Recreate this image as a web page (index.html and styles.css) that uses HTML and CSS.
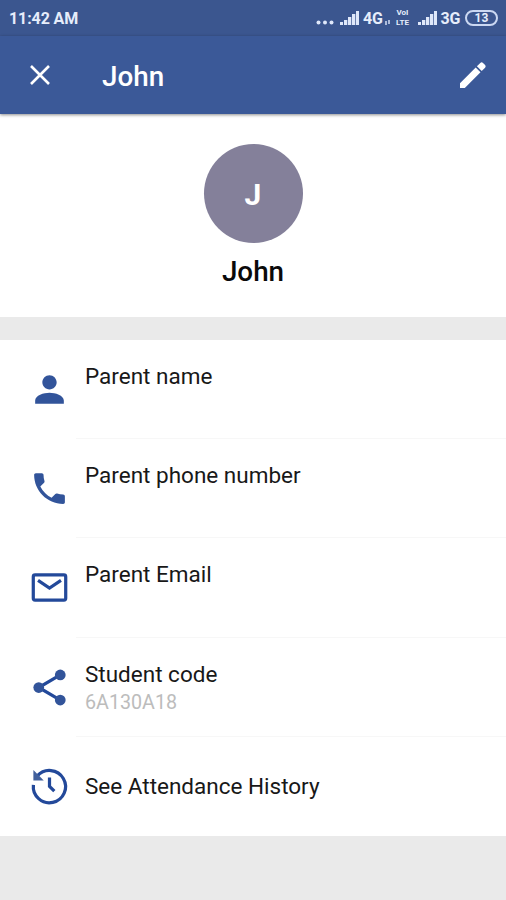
FILE: index.html
```html
<!DOCTYPE html>
<html lang="en">
<head>
<meta charset="utf-8">
<title>John</title>
<link rel="stylesheet" href="styles.css">
</head>
<body>
<div class="status">
  <span class="time">11:42 AM</span>
  <div class="indicators">
    <svg class="dots" width="18" height="16" viewBox="0 0 18 16"><circle cx="2.5" cy="12.5" r="2"/><circle cx="9" cy="12.5" r="2"/><circle cx="15.5" cy="12.5" r="2"/></svg>
    <svg class="signal" width="20" height="16" viewBox="0 0 20 16"><path d="M0 12h3v3H0zM4 10h3.300v5H4zM8 7h3.300v8H8zM12 4h3.300v11H12zM16 1h3v14h-3z"/></svg>
    <span class="net">4G</span>
    <svg class="data" width="6" height="16" viewBox="0 0 6 16"><path d="M0 15v-4h2v4zM3 14v-4h2v4z"/></svg>
    <span class="volte"><span>VoI</span><span>LTE</span></span>
    <svg class="signal second" width="20" height="16" viewBox="0 0 20 16"><path d="M0 12h3v3H0zM4 10h3.300v5H4zM8 7h3.300v8H8zM12 4h3.300v11H12zM16 1h3v14h-3z"/></svg>
    <span class="net">3G</span>
    <span class="battery">13</span>
  </div>
</div>
<header class="appbar">
  <svg class="close" width="20" height="20" viewBox="0 0 20 20"><path d="M1 1l18 18M19 1L1 19"/></svg>
  <h1>John</h1>
  <svg class="edit" width="28" height="28" viewBox="0 0 28 28"><path d="M1 22.200V27h4.800L21.500 11.300l-4.800-4.800zM22.700 10.100l3.400-3.400a2 2 0 0 0 0-2.700l-2.100-2.100a2 2 0 0 0-2.700 0l-3.400 3.400z"/></svg>
</header>
<section class="profile">
  <div class="avatar">J</div>
  <h2>John</h2>
</section>
<main class="list">
  <div class="row">
    <svg class="icon" viewBox="0 0 24 24"><path d="M12 12c2.210 0 4-1.790 4-4s-1.790-4-4-4-4 1.790-4 4 1.790 4 4 4zm0 1.800c-3.200 0-8 1.500-8 4.400V20h16v-1.800c0-2.900-4.800-4.400-8-4.400z"/></svg>
    <div class="text"><div class="label">Parent name</div></div>
  </div>
  <div class="row">
    <svg class="icon phone" viewBox="0 0 24 24"><path d="M6.620 10.790c1.440 2.830 3.760 5.140 6.590 6.590l2.200-2.200c.27-.27.67-.36 1.020-.24 1.120.37 2.330.57 3.570.57.55 0 1 .45 1 1V20c0 .55-.45 1-1 1-9.390 0-17-7.610-17-17 0-.55.45-1 1-1h3.500c.55 0 1 .45 1 1 0 1.250.2 2.450.57 3.570.11.35.030.740-.250 1.020l-2.200 2.200z"/></svg>
    <div class="text"><div class="label">Parent phone number</div></div>
  </div>
  <div class="row">
    <svg class="icon line" viewBox="0 0 24 24"><rect x="2.950" y="4.950" width="18.100" height="14.100" rx="1"/><path d="M5.600 8l6.400 4.300L18.400 8"/></svg>
    <div class="text"><div class="label">Parent Email</div></div>
  </div>
  <div class="row">
    <svg class="icon share" viewBox="0 0 24 24"><path class="links" d="M18 5L6 12l12 7"/><circle cx="18" cy="5" r="3"/><circle cx="6" cy="12" r="3"/><circle cx="18" cy="19" r="3"/></svg>
    <div class="text"><div class="label">Student code</div><div class="value">6A130A18</div></div>
  </div>
  <div class="row last">
    <svg class="icon line" viewBox="0 0 24 24"><path d="M3 11.100a9 9 0 1 0 2.200-5M12 7v4.900l2.700 2.700"/><path class="solid" d="M3 2.800v5.800h5.800z"/></svg>
    <div class="text"><div class="label">See Attendance History</div></div>
  </div>
</main>
</body>
</html>
```
FILE: styles.css
```css
* { box-sizing: border-box; }
body {
  margin: 0;
  min-height: 900px;
  background: #eaeaea;
  font-family: Roboto, "Liberation Sans", sans-serif;
}
svg { display: block; flex: none; }
.status {
  height: 36px;
  padding: 0 8px 0 9px;
  display: flex;
  align-items: center;
  justify-content: space-between;
  background: #3b568f;
  color: #e6edfb;
  fill: #dfe8fa;
}
.time { font-size: 16px; font-weight: 700; line-height: 20px; padding-top: 2px; letter-spacing: -.1px; }
.indicators { display: flex; align-items: center; height: 20px; }
.dots { margin-right: 1px; }
.signal { margin-left: 5px; }
.signal.second { margin-left: 6px; }
.net { font-size: 16px; font-weight: 700; line-height: 20px; padding-top: 2px; margin-left: 3px; letter-spacing: -.3px; }
.data { margin-left: 2px; opacity: .7; }
.volte {
  width: 18px;
  margin-left: 3px;
  font-size: 8px;
  font-weight: 700;
  line-height: 10px;
  text-align: center;
}
.volte span { display: block; }
.battery {
  width: 33px;
  height: 16px;
  margin-left: 5px;
  border: 2px solid #cbd8f2;
  border-radius: 8px;
  font-size: 12px;
  font-weight: 700;
  line-height: 13px;
  text-align: center;
}
.appbar {
  position: relative;
  height: 78px;
  padding: 0 19px 0 30px;
  display: flex;
  align-items: center;
  background: #3b5998;
  color: #fff;
  box-shadow: 0 1px 3px rgba(0, 0, 0, .45);
}
.close { fill: none; stroke: #fff; stroke-width: 2.6; }
h1 { flex: 1; margin: 3px 0 0 52px; font-size: 27.8px; font-weight: 500; line-height: 34px; }
.edit { fill: #fff; }
.profile {
  height: 203px;
  padding-top: 30px;
  display: flex;
  flex-direction: column;
  align-items: center;
  background: #fff;
}
.avatar {
  width: 99px;
  height: 99px;
  border-radius: 50%;
  background: #84809a;
  color: #fff;
  font-size: 30px;
  font-weight: 700;
  line-height: 101px;
  text-align: center;
}
h2 { margin: 12px 0 0; font-size: 27.8px; font-weight: 500; line-height: 34px; color: #0a0a0a; }
.list { margin-top: 23px; height: 496px; background: #fff; display: grid; grid-template-rows: repeat(5, 1fr); }
.row { display: flex; align-items: center; padding-left: 28px; }
.icon { width: 43px; height: 43px; fill: #32549a; }
.phone { width: 41px; height: 41px; margin: 0 1px; }
.line { fill: none; stroke: #23499a; stroke-width: 1.8; }
.solid { fill: #42609c; stroke: none; }
.links { fill: none; stroke: #23499a; stroke-width: 1.8; }
.text {
  flex: 1;
  align-self: stretch;
  margin-left: 5px;
  padding: 22px 0 0 9px;
  border-bottom: 1px solid #f7f7f7;
}
.label { font-size: 22.5px; line-height: 28px; color: #181818; white-space: nowrap; }
.value { font-size: 19.7px; line-height: 26px; margin-top: 2px; color: #bcbcbc; }
.last .text { border: 0; padding-top: 35px; }
```
